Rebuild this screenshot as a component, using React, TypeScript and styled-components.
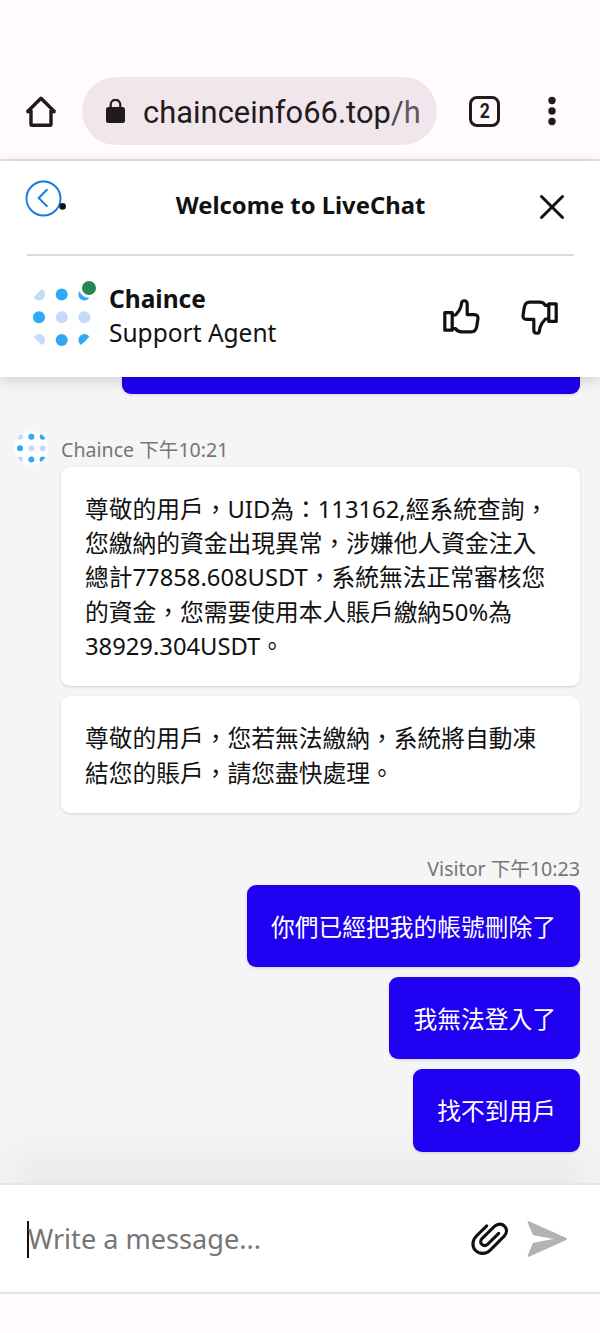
import React from "react";
import styled, { createGlobalStyle } from "styled-components";

const GlobalStyle = createGlobalStyle`
  * { box-sizing: border-box; }
  body {
    margin: 0;
    background: #fffbff;
    font-family: "Noto Sans", "Noto Sans CJK TC", sans-serif;
    color: #111;
  }
`;

const Screen = styled.div`
  width: 600px;
  height: 1333px;
  display: flex;
  flex-direction: column;
  overflow: hidden;
`;

const BrowserBar = styled.header`
  height: 161px;
  flex: none;
  display: flex;
  align-items: flex-start;
  padding: 77px 0 0 25px;
  background: #fffbff;
  border-bottom: 2px solid #ebe2e6;
`;

const BarIcon = styled.div<{ $width: number; $ml?: number }>`
  width: ${(p) => p.$width}px;
  height: 68px;
  margin-left: ${(p) => p.$ml ?? 0}px;
  display: flex;
  align-items: center;
  justify-content: center;
`;

const AddressPill = styled.div`
  width: 355px;
  height: 68px;
  margin-left: 25px;
  padding: 0 12px 0 24px;
  display: flex;
  align-items: center;
  border-radius: 34px;
  background: #f0e6eb;
`;

const Url = styled.span`
  margin: 3px 0 0 18px;
  font: 400 30.8px/40px Roboto, sans-serif;
  letter-spacing: 0.06px;
  white-space: nowrap;
  color: #211a1e;
`;

const UrlPath = styled.span<{ $color: string }>`
  color: ${(p) => p.$color};
`;

const TabCount = styled.div`
  width: 31px;
  height: 31px;
  display: flex;
  align-items: center;
  justify-content: center;
  border: 3px solid #211a1e;
  border-radius: 8px;
  font: 700 20px/20px Roboto, sans-serif;
  color: #211a1e;
`;

const TabDigit = styled.span`
  transform: scaleX(0.88);
`;

const ChatHeader = styled.section`
  position: relative;
  z-index: 1;
  height: 216px;
  flex: none;
  padding: 0 26px 0 27px;
  background: #fff;
  box-shadow: 0 3px 14px rgba(0, 0, 0, 0.16);
`;

const TitleRow = styled.div`
  height: 95px;
  display: flex;
  align-items: center;
  justify-content: space-between;
  padding: 0 8px 5px 0;
  border-bottom: 2px solid #d9d9d9;
`;

const Title = styled.h1`
  margin: 0;
  font-size: 23.8px;
  line-height: 34px;
  font-weight: 700;
  white-space: nowrap;
`;

const BackButton = styled.div`
  width: 42px;
  height: 42px;
  margin: -10px 0 0 -3px;
  display: flex;
`;

const CloseButton = styled.div`
  width: 28px;
  height: 28px;
  margin: 3px 0 0 3px;
  display: flex;
`;

const AgentRow = styled.div`
  height: 120px;
  display: flex;
  align-items: center;
`;

const Avatar = styled.div`
  position: relative;
  width: 68px;
  height: 68px;
  margin-top: 2px;
`;

const StatusRing = styled.div`
  position: absolute;
  top: -5px;
  right: -4px;
  width: 20px;
  height: 20px;
  display: flex;
  align-items: center;
  justify-content: center;
  border-radius: 50%;
  background: #fff;
`;

const StatusDot = styled.i`
  width: 14px;
  height: 14px;
  border-radius: 50%;
  background: #268750;
`;

const AgentText = styled.div`
  flex: 1;
  margin-left: 14px;
  font-size: 24.5px;
  line-height: 34px;
`;

const AgentName = styled.div`
  font-weight: 700;
`;

const RateButton = styled.div<{ $flip?: boolean }>`
  width: 37px;
  height: 36px;
  margin: ${(p) => (p.$flip ? "2px 16.5px 0 0" : "1px 41px 0 0")};
  transform: ${(p) => (p.$flip ? "rotate(180deg)" : "none")};
  display: flex;
`;

const Messages = styled.main`
  height: 806px;
  flex: none;
  padding: 0 20px 0 14px;
  display: flex;
  flex-direction: column;
  background:
    linear-gradient(90deg, rgba(245, 245, 245, 0.7), rgba(245, 245, 245, 0) 36px, rgba(245, 245, 245, 0) 564px, rgba(245, 245, 245, 0.7)),
    linear-gradient(180deg, #f5f5f5 745px, #ebebeb 806px);
`;

const ClippedBubble = styled.div`
  width: 458px;
  height: 16.5px;
  flex: none;
  align-self: flex-end;
  background: #2000f0;
  border-radius: 0 0 9px 9px;
  box-shadow: 0 1px 3px rgba(0, 0, 0, 0.14);
`;

const IncomingHead = styled.div`
  display: flex;
  align-items: center;
  height: 35px;
  margin: 37px 0 1px;
`;

const SmallAvatar = styled.div`
  width: 34px;
  height: 34px;
  display: flex;
  align-items: center;
  justify-content: center;
  border-radius: 50%;
  background: #fff;
`;

const Meta = styled.div`
  font-size: 19.6px;
  line-height: 28px;
  color: #757575;
  white-space: nowrap;
`;

const IncomingMeta = styled(Meta)`
  margin: 3px 0 0 13px;
`;

const VisitorMeta = styled(Meta)`
  align-self: flex-end;
  margin: 32.5px 0 2px;
`;

const Bubble = styled.div<{ $mine?: boolean }>`
  align-self: flex-end;
  width: ${(p) => (p.$mine ? "auto" : "519px")};
  margin-bottom: 10px;
  padding: 25px 24px 22.6px;
  border-radius: 9px;
  background: ${(p) => (p.$mine ? "#2000f0" : "#fff")};
  color: ${(p) => (p.$mine ? "#fff" : "#111")};
  box-shadow: 0 1px 3px rgba(0, 0, 0, 0.14);
  font-size: 23.75px;
  line-height: 34.45px;
  white-space: nowrap;
`;

const Line = styled.div``;

const Composer = styled.footer`
  height: 111px;
  flex: none;
  display: flex;
  align-items: center;
  padding: 0 32px 0 27px;
  background: #fff;
  border-top: 2px solid #e6e6e6;
  border-bottom: 2px solid #e9e0e4;
`;

const Caret = styled.i`
  width: 2px;
  height: 37px;
  margin-top: 1px;
  background: #111;
`;

const Placeholder = styled.span`
  flex: 1;
  margin: 1px 0 0 -1px;
  font-size: 27.1px;
  line-height: 38px;
  color: #757575;
`;

const ClipIcon = styled.svg`
  margin: 1px 18px 0 0;
`;

const BLUE = "#2fa8f5";
const PALE = "#c5daf8";

function DotGrid({ size, id }: { size: number; id: string }) {
  const dots = [
    [PALE, BLUE, BLUE],
    [BLUE, PALE, PALE],
    [PALE, BLUE, BLUE],
  ];
  return (
    <svg width={size} height={size} viewBox="0 0 68 68">
      <clipPath id={id}>
        <circle cx="34.5" cy="34" r="34" />
      </clipPath>
      <g clipPath={`url(#${id})`}>
        {dots.map((row, y) =>
          row.map((fill, x) => (
            <circle key={`${x}${y}`} cx={12 + x * 22.7} cy={11.6 + y * 22.7} r="6" fill={fill} />
          ))
        )}
      </g>
    </svg>
  );
}

function Thumb() {
  return (
    <svg width="37" height="36" viewBox="0 0 37 36" fill="none" stroke="#111" strokeWidth="3.2" strokeLinejoin="round">
      <path d="M1.8 13.6H9.2V31.2H1.8Z" />
      <path d="M9.5 16H12.6C15.3 13.2 17.2 10.4 18 7.3L18.6 3.8C19.4 .9 24.2 .9 24.2 5V15.6H31.2C34.2 15.6 35.2 17.2 34.9 19.8L33.8 27.3C33.1 31 31.8 32.8 28.5 32.8H18.5C15.5 32.8 14 32 12.6 29.7H9.5" />
    </svg>
  );
}

export default function App() {
  return (
    <Screen>
      <GlobalStyle />
      <BrowserBar>
        <BarIcon $width={32}>
          <svg width="32" height="32" viewBox="0 0 32 32" fill="none" stroke="#211a1e" strokeWidth="3.4" strokeLinejoin="round">
            <path d="M2.2 17 16 3.2 29.8 17" />
            <path d="M6 15V29.3Q6 30.3 7 30.3H25Q26 30.3 26 29.3V15M1.5 16.6H6M26 16.6h4.5" />
          </svg>
        </BarIcon>
        <AddressPill>
          <svg width="19" height="24" viewBox="0 0 19 24">
            <rect x="0" y="8" width="19" height="16" rx="2.5" fill="#211a1e" />
            <path d="M4.7 9V5.6a4.8 4.8 0 0 1 9.6 0V9" fill="none" stroke="#211a1e" strokeWidth="2.2" />
          </svg>
          <Url>
            chainceinfo66.top<UrlPath $color="#4d464a">/</UrlPath>
            <UrlPath $color="#63595e">h</UrlPath>
          </Url>
        </AddressPill>
        <BarIcon $width={31} $ml={32}>
          <TabCount>
            <TabDigit>2</TabDigit>
          </TabCount>
        </BarIcon>
        <BarIcon $width={8} $ml={48}>
          <svg width="8" height="30" viewBox="0 0 8 30" fill="#211a1e">
            <circle cx="4" cy="4.5" r="3.7" />
            <circle cx="4" cy="15" r="3.7" />
            <circle cx="4" cy="25.5" r="3.7" />
          </svg>
        </BarIcon>
      </BrowserBar>

      <ChatHeader>
        <TitleRow>
          <BackButton>
            <svg width="42" height="42" viewBox="0 0 42 42" fill="none">
              <circle cx="19.5" cy="19.5" r="17" stroke="#1679de" strokeWidth="1.9" />
              <path d="M23.4 10.3 14.7 19 23.4 27.6" stroke="#1679de" strokeWidth="2" />
              <circle cx="38.6" cy="27.4" r="3.3" fill="#111" />
            </svg>
          </BackButton>
          <Title>Welcome to LiveChat</Title>
          <CloseButton>
            <svg width="28" height="28" viewBox="0 0 28 28" stroke="#111" strokeWidth="3" strokeLinecap="round">
              <path d="M3.5 3.5 24.5 24.5M24.5 3.5 3.5 24.5" />
            </svg>
          </CloseButton>
        </TitleRow>
        <AgentRow>
          <Avatar>
            <DotGrid size={68} id="agentAvatar" />
            <StatusRing>
              <StatusDot />
            </StatusRing>
          </Avatar>
          <AgentText>
            <AgentName>Chaince</AgentName>
            <div>Support Agent</div>
          </AgentText>
          <RateButton>
            <Thumb />
          </RateButton>
          <RateButton $flip>
            <Thumb />
          </RateButton>
        </AgentRow>
      </ChatHeader>

      <Messages>
        <ClippedBubble />
        <IncomingHead>
          <SmallAvatar>
            <DotGrid size={34} id="messageAvatar" />
          </SmallAvatar>
          <IncomingMeta>Chaince 下午10:21</IncomingMeta>
        </IncomingHead>
        <Bubble>
          <Line>尊敬的用戶，UID為：113162,經系統查詢，</Line>
          <Line>您繳納的資金出現異常，涉嫌他人資金注入</Line>
          <Line>總計77858.608USDT，系統無法正常審核您</Line>
          <Line>的資金，您需要使用本人賬戶繳納50%為</Line>
          <Line>38929.304USDT。</Line>
        </Bubble>
        <Bubble>
          <Line>尊敬的用戶，您若無法繳納，系統將自動凍</Line>
          <Line>結您的賬戶，請您盡快處理。</Line>
        </Bubble>
        <VisitorMeta>Visitor 下午10:23</VisitorMeta>
        <Bubble $mine>你們已經把我的帳號刪除了</Bubble>
        <Bubble $mine>我無法登入了</Bubble>
        <Bubble $mine>找不到用戶</Bubble>
      </Messages>

      <Composer>
        <Caret />
        <Placeholder>Write a message...</Placeholder>
        <ClipIcon width="38" height="34" viewBox="0 0 38 34" fill="none" stroke="#111" strokeWidth="3.1" strokeLinecap="round" strokeLinejoin="round">
          <path d="M15.7 3.8 5.4 14C1 18.5.8 24.6 4.6 28.5 8.6 32.6 15 32.2 19 28.3L33.2 14.2C36.2 11.2 36.3 6.8 33.5 4.1 30.8 1.3 26.6 1.5 23.7 4.2L11.2 16.4C9.3 18.3 9.2 20.7 10.9 22.4 12.6 24 15 23.8 16.8 22.1L27.7 11.4" />
        </ClipIcon>
        <svg width="41" height="36" viewBox="0 0 41 36" fill="#b3b3b3" stroke="#b3b3b3" strokeWidth="2" strokeLinejoin="round">
          <path d="M1.6 1.2 38.9 18 1.6 34.8 6.6 22.8 32 18 6.6 13.2Z" />
        </svg>
      </Composer>
    </Screen>
  );
}
